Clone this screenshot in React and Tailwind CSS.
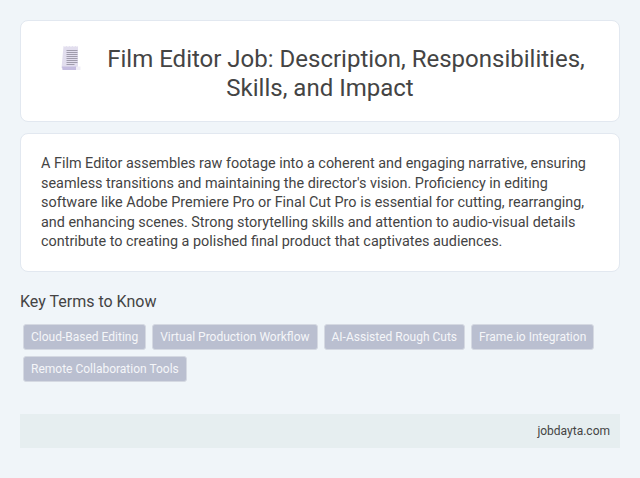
const terms = [
  "Cloud-Based Editing",
  "Virtual Production Workflow",
  "AI-Assisted Rough Cuts",
  "Frame.io Integration",
  "Remote Collaboration Tools",
];

function ScrollIcon() {
  return (
    <svg width="32" height="32" viewBox="0 0 32 32" className="inline-block align-middle mr-5 -my-2">
      <g transform="translate(0 -3)">
        <path d="M8.500 4l1.500 .8 1.500-.8 1.500 .8 1.500-.8 1.500 .8 1.500-.8 1.500 .8 1.500-.8 1.500 .8 1 -.8v22h-16.500z" fill="#e2deee" />
        <path d="M11.500 8.500h11M11.500 10.500h11M11.500 12.500h11M11.500 14.500h11M11.500 16.500h11M11.500 18.500h11M11.500 20.500h11M11.500 22.500h8" stroke="#a09cac" strokeWidth="1" />
        <path d="M7 24.500h15v3.500h-14.500z" fill="#c5bde0" />
        <path d="M21 24.500h4.500v3.500h-4.500z" fill="#f1eef7" />
      </g>
    </svg>
  );
}

export default function App() {
  return (
    <div className="min-h-[478px] bg-[#f0f5f9] p-5 font-['Roboto',sans-serif]">
      <div className="rounded-lg border border-[#e2e8f0] bg-white px-5 pt-6 pb-[18px] text-center">
        <h1 className="text-[24px] leading-[29px] font-normal text-[#444444]">
          <ScrollIcon />
          Film Editor Job: Description, Responsibilities, Skills, and Impact
        </h1>
      </div>

      <div className="mt-[11px] rounded-lg border border-[#e2e8f0] bg-white px-5 pt-5 pb-[19px]">
        <p className="text-[14.400px] leading-[19.500px] text-[#444444]">
          A Film Editor assembles raw footage into a coherent and engaging narrative, ensuring seamless transitions and maintaining the director's vision. Proficiency in editing software like Adobe Premiere Pro or Final Cut Pro is essential for cutting, rearranging, and enhancing scenes. Strong storytelling skills and attention to audio-visual details contribute to creating a polished final product that captivates audiences.
        </p>
      </div>

      <h2 className="mt-5 text-[16px] leading-[19px] font-normal text-[#444444]">Key Terms to Know</h2>
      <div className="mt-[13px] flex flex-wrap gap-x-[6px] gap-y-[6px] px-[3px]">
        {terms.map((term) => (
          <span
            key={term}
            className="rounded-[3px] border border-[#d5d9e2] bg-[#babfd0] px-[7px] py-[5px] text-[12px] leading-[14px] text-[#f5f6f9]"
          >
            {term}
          </span>
        ))}
      </div>

      <div className="mt-[32px] bg-[#e6eef0] px-[10px] py-[9px] text-right text-[12px] leading-[16px] text-[#444444]">
        jobdayta.com
      </div>
    </div>
  );
}
